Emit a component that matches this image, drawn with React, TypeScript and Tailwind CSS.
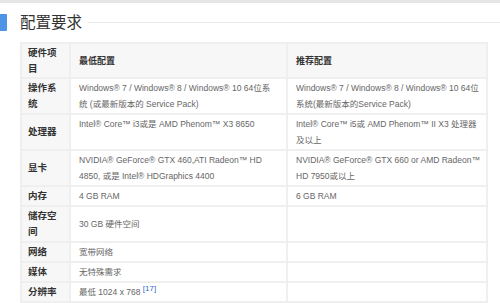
const rows: { label: string; min: React.ReactNode; rec: React.ReactNode; top?: boolean }[] = [
  {
    label: "操作系统",
    min: "Windows® 7 / Windows® 8 / Windows® 10 64位系统 (或最新版本的 Service Pack)",
    rec: "Windows® 7 / Windows® 8 / Windows® 10 64位系统(最新版本的Service Pack)",
  },
  {
    label: "处理器",
    min: "Intel® Core™ i3或是 AMD Phenom™ X3 8650",
    rec: "Intel® Core™ i5或 AMD Phenom™ II X3 处理器及以上",
    top: true,
  },
  {
    label: "显卡",
    min: "NVIDIA® GeForce® GTX 460,ATI Radeon™ HD 4850, 或是 Intel® HDGraphics 4400",
    rec: "NVIDIA® GeForce® GTX 660 or AMD Radeon™ HD 7950或以上",
  },
  { label: "内存", min: "4 GB RAM", rec: "6 GB RAM" },
  { label: "储存空间", min: "30 GB 硬件空间", rec: "" },
  { label: "网络", min: "宽带网络", rec: "" },
  { label: "媒体", min: "无特殊需求", rec: "" },
  {
    label: "分辨率",
    min: (
      <>
        最低 1024 x 768{" "}
        <span className="relative -top-[4px] text-[#3366cc] text-[8px] leading-none">[17]</span>
      </>
    ),
    rec: "",
  },
];

export default function App() {
  return (
    <div className="w-[500px] h-[303px] bg-white overflow-hidden font-['Liberation_Sans','Noto_Sans_CJK_SC',sans-serif]">
      <div className="h-[3px] bg-[#e6e6e6]" />
      <div className="flex items-center mt-[11px] h-[17px]">
        <div className="w-[7px] h-[17px] bg-[#4d94e6] rounded-r-[1px]" />
        <h2 className="ml-[13px] text-[15.5px] leading-none text-[#333]">配置要求</h2>
        <div className="flex-1 ml-[6px] h-px bg-[#e8e8e8]" />
      </div>
      <table className="ml-[20px] mt-[11px] w-[468px] border-collapse table-fixed text-[8.5px] leading-[16px]">
        <colgroup>
          <col className="w-[49px]" />
          <col className="w-[217px]" />
          <col />
        </colgroup>
        <thead>
          <tr className="bg-[#f7f7f7] h-[35px]">
            <th className="border-2 border-[#efefef] px-[6px] py-0 text-left font-bold text-[#333] text-[9.5px] align-middle">
              硬件项目
            </th>
            <th className="border-2 border-[#efefef] px-[8px] py-0 text-left font-bold text-[#333] text-[9px]">最低配置</th>
            <th className="border-2 border-[#efefef] px-[8px] py-0 text-left font-bold text-[#333] text-[9px]">推荐配置</th>
          </tr>
        </thead>
        <tbody>
          {rows.map((r) => (
            <tr key={r.label}>
              <th className="bg-[#f7f7f7] border-2 border-[#efefef] px-[6px] py-[1px] text-left font-bold text-[#333] text-[9.5px] align-middle">
                {r.label}
              </th>
              <td
                className={`border-2 border-[#efefef] px-[8px] py-[1px] text-[#666] ${r.top ? "align-top" : "align-middle"}`}
              >
                {r.min}
              </td>
              <td className="border-2 border-[#efefef] pl-[8px] pr-[2px] py-[1px] text-[#666] align-middle">{r.rec}</td>
            </tr>
          ))}
        </tbody>
      </table>
    </div>
  );
}
